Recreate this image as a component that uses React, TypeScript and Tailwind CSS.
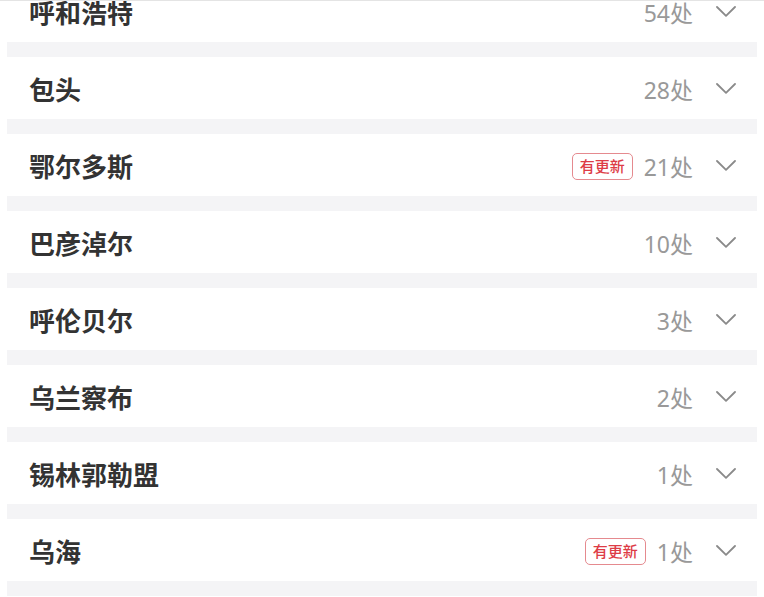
const cities = [
  { name: '呼和浩特', count: 54, updated: false },
  { name: '包头', count: 28, updated: false },
  { name: '鄂尔多斯', count: 21, updated: true },
  { name: '巴彦淖尔', count: 10, updated: false },
  { name: '呼伦贝尔', count: 3, updated: false },
  { name: '乌兰察布', count: 2, updated: false },
  { name: '锡林郭勒盟', count: 1, updated: false },
  { name: '乌海', count: 1, updated: true },
];

const Chevron = () => (
  <svg width="20" height="11" viewBox="0 0 20 11" fill="none">
    <path d="M1 1L10 9.8L19 1" stroke="#8a8a8a" strokeWidth="1.8" strokeLinecap="round" strokeLinejoin="round" />
  </svg>
);

const App = () => {
  return (
    <div
      className="relative w-[764px] h-[597px] overflow-hidden bg-white"
      style={{ fontFamily: '"Noto Sans", "Noto Sans CJK SC", sans-serif' }}
    >
      <div className="absolute top-0 left-0 right-0 h-[1px] bg-[#e4e4e4] z-10" />
      <div className="-mt-[20px] px-[7px]">
        {cities.map((c) => (
          <div key={c.name}>
            <div className="h-[62px] bg-white flex items-center pl-[22px] pr-[21px]">
              <span className="pt-[4px] text-[26px] font-bold text-[#333333] leading-none">{c.name}</span>
              <div className="ml-auto flex items-center">
                {c.updated && (
                  <span className="mt-[3px] mr-[11px] h-[27px] px-[7px] flex items-center border border-[#e58a8f] rounded-[5px] text-[15px] font-medium text-[#dd3c46] leading-none">
                    有更新
                  </span>
                )}
                <span className="pt-[4px] text-[23px] text-[#999999] leading-none">{c.count}处</span>
                <span className="ml-[23px] pt-[1px] flex items-center">
                  <Chevron />
                </span>
              </div>
            </div>
            <div className="h-[15px] bg-[#f4f4f6]" />
          </div>
        ))}
      </div>
    </div>
  );
};

export default App;
